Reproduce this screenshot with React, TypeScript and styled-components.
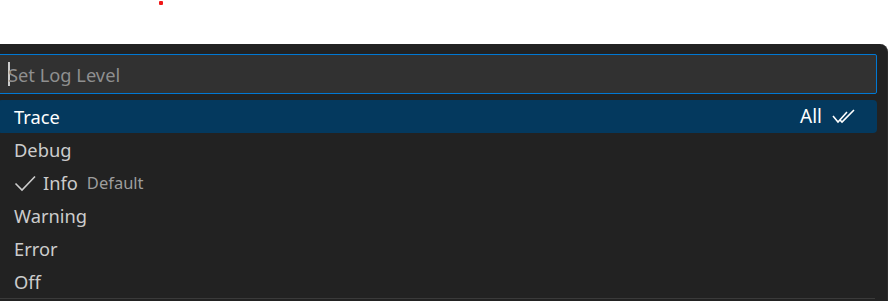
import React from "react";
import styled, { createGlobalStyle } from "styled-components";

const Global = createGlobalStyle`
  html, body {
    margin: 0;
    padding: 0;
    background: #ffffff;
    overflow: hidden;
  }
  body {
    font-family: "Noto Sans", "Open Sans", "Liberation Sans", sans-serif;
  }
`;

const Page = styled.div`
  position: relative;
  width: 890px;
  height: 301px;
  overflow: hidden;
  padding-top: 44px;
  box-sizing: border-box;
`;

const Dot = styled.div`
  position: absolute;
  left: 159px;
  top: 1px;
  width: 4px;
  height: 4px;
  border-radius: 1px;
  background: #f01818;
`;

const Panel = styled.div`
  margin-left: -12px;
  width: 900px;
  height: 270px;
  box-sizing: border-box;
  padding: 10px 10px 0 10px;
  background: #222222;
  border-top-right-radius: 8px;
  border-right: 1px solid #2b2b2b;
  display: flex;
  flex-direction: column;
  gap: 6px;
`;

const Input = styled.div`
  height: 40px;
  box-sizing: border-box;
  border: 1px solid #0078d4;
  border-radius: 2px;
  background: #313131;
  display: flex;
  align-items: center;
  padding-left: 9px;
  font-size: 18.3px;
  color: #8f8f8f;
`;

const Caret = styled.span`
  display: inline-block;
  width: 2px;
  height: 24px;
  background: #cccccc;
  margin-right: -2px;
`;

const List = styled.div`
  display: flex;
  flex-direction: column;
  border-bottom: 1px solid #3a3a3a;
  margin-right: 2px;
`;

const Row = styled.div<{ $active?: boolean }>`
  height: 33px;
  display: flex;
  align-items: center;
  padding: 0 20px 0 16px;
  border-radius: 4px;
  margin-right: -2px;
  background: ${(p) => (p.$active ? "#04395e" : "transparent")};
  color: ${(p) => (p.$active ? "#ffffff" : "#cccccc")};
  font-size: 18.3px;
  line-height: 33px;
`;

const Label = styled.span`
  flex: none;
`;

const Desc = styled.span`
  margin-left: 9px;
  font-size: 16.5px;
  color: #9d9d9d;
`;

const Spacer = styled.span`
  flex: 1;
`;

const Right = styled.span`
  display: flex;
  align-items: center;
  gap: 9px;
  font-size: 19px;
`;

const CheckMark = () => (
  <svg width="22" height="22" viewBox="0 0 22 22" style={{ marginRight: 7 }}>
    <path d="M1.5 11.5 L8 18 L21 4.5" fill="none" stroke="#cccccc" strokeWidth="1.6" />
  </svg>
);

const CheckAll = () => (
  <svg width="26" height="18" viewBox="0 0 26 18">
    <path d="M2 8 L7 14 L16 4" fill="none" stroke="#ffffff" strokeWidth="1.6" />
    <path d="M9 12 L11 14 L23 2" fill="none" stroke="#ffffff" strokeWidth="1.6" />
  </svg>
);

const levels = ["Trace", "Debug", "Info", "Warning", "Error", "Off"];

export default function App() {
  return (
    <Page>
      <Global />
      <Dot />
      <Panel>
        <Input>
          <Caret />
          Set Log Level
        </Input>
        <List>
          {levels.map((l, i) => (
            <Row key={l} $active={i === 0}>
              {l === "Info" && <CheckMark />}
              <Label>{l}</Label>
              {l === "Info" && <Desc>Default</Desc>}
              <Spacer />
              {i === 0 && (
                <Right>
                  All
                  <CheckAll />
                </Right>
              )}
            </Row>
          ))}
        </List>
      </Panel>
    </Page>
  );
}
